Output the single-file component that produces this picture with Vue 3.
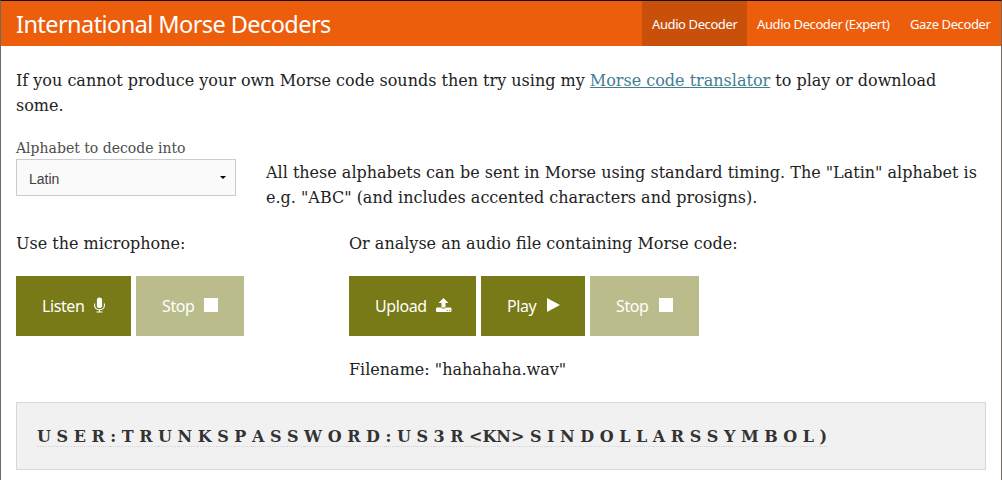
<script setup>
const nav = [
  { label: 'Audio Decoder', cls: 'n1 active' },
  { label: 'Audio Decoder (Expert)', cls: 'n2' },
  { label: 'Gaze Decoder', cls: 'n3' },
]
const decoded = [
  ...'USER:TRUNKSPASSWORD:US3R',
  '<KN>',
  ...'SINDOLLARSSYMBOL)',
]
</script>

<template>
  <div class="page">
    <header class="bar">
      <h1><span>International Morse Decoders</span></h1>
      <nav>
        <a v-for="n in nav" :key="n.label" :class="n.cls"><span>{{ n.label }}</span></a>
      </nav>
    </header>
    <main>
      <p class="intro">If you cannot produce your own Morse code sounds then try using my <a class="link">Morse code translator</a> to play or download some.</p>
      <section class="alphabet">
        <div class="field">
          <label>Alphabet to decode into</label>
          <div class="select">
            <span>Latin</span>
            <svg width="6" height="3" viewBox="0 0 6 3"><path d="M0 0h6L3 3z" /></svg>
          </div>
        </div>
        <p>All these alphabets can be sent in Morse using standard timing. The "Latin" alphabet is e.g. "ABC" (and includes accented characters and prosigns).</p>
      </section>
      <section class="sources">
        <div class="mic">
          <p>Use the microphone:</p>
          <div class="buttons">
            <button class="listen"><span>Listen</span>
              <svg width="11" height="16" viewBox="0 0 11 16"><rect x="2.9" y="0.5" width="5.200" height="10.500" rx="2.6" fill="#fff" /><path d="M.6 6.500v2a4.900 4.300 0 0 0 9.800 0v-2M5.500 12.800V15M2.500 15h6" fill="none" stroke="#fff" stroke-width="1.1" /></svg>
            </button>
            <button class="stop off"><span>Stop</span>
              <svg width="14" height="14" viewBox="0 0 14 14"><rect width="14" height="14" fill="#fff" /></svg>
            </button>
          </div>
        </div>
        <div class="file">
          <p>Or analyse an audio file containing Morse code:</p>
          <div class="buttons">
            <button class="upload"><span>Upload</span>
              <svg width="16" height="14" viewBox="0 0 16 14"><path d="M7.500 0l5 5H9.500v4.500h-4V5h-3zM1 9.500h4q.6 1 1.500 1h2q.9 0 1.500-1h4.500q1 0 1 1v2.500q0 1-1 1H1q-1 0-1-1v-2.500q0-1 1-1z" fill="#fff" /><path d="M10.700 12.500h1M13 12.500h1" stroke="#777a16" stroke-width="1" /></svg>
            </button>
            <button class="play"><span>Play</span>
              <svg width="13" height="14" viewBox="0 0 13 14"><path d="M0 0l13 7L0 14z" fill="#fff" /></svg>
            </button>
            <button class="stop2 off"><span>Stop</span>
              <svg width="14" height="14" viewBox="0 0 14 14"><rect width="14" height="14" fill="#fff" /></svg>
            </button>
          </div>
          <p class="filename">Filename: "hahahaha.wav"</p>
        </div>
      </section>
      <div class="output"><span v-for="(c, i) in decoded" :key="i">{{ i < decoded.length - 1 ? c + ' ' : c }}</span></div>
    </main>
  </div>
</template>

<style>
body { margin: 0; overflow: hidden; }
</style>

<style scoped>
* { box-sizing: border-box; }
.page {
  height: 480px;
  border: solid #75695f;
  border-width: 1px 1px 0;
  border-top-color: #16120f;
  background: #fff;
  color: #222;
  font: 16px/25px "DejaVu Serif", serif;
  overflow: hidden;
}
p { margin: 0; }
.bar {
  height: 45px;
  display: flex;
  justify-content: space-between;
  background: #ec5e0c;
  color: #fff;
  font-family: "Noto Sans", sans-serif;
}
h1 { margin: 0; padding-left: 15px; font-size: 23.5px; font-weight: 400; line-height: 47px; letter-spacing: -0.57px; white-space: nowrap; }
nav { display: flex; font-size: 13px; line-height: 47px; letter-spacing: -0.4px; }
nav a { padding-left: 10px; white-space: nowrap; }
.n1 { width: 105px; }
.n2 { width: 153px; }
.n3 { width: 101px; }
.active { background: #c8500b; }
main { padding: 22px 15px 0; }
.link { color: #417e91; text-decoration: underline; }
.alphabet { display: flex; margin-top: 20px; height: 75px; }
.field { width: 220px; margin-right: 30px; }
label { display: block; color: #4d4d4d; font-size: 14px; line-height: 21px; white-space: nowrap; }
.select {
  height: 37px;
  display: flex;
  align-items: center;
  justify-content: space-between;
  padding: 2px 9px 0 12px;
  border: 1px solid #ccc;
  background: #fafafa;
  color: #404040;
  font: 14px "Liberation Sans", sans-serif;
}
.select svg { margin-top: -3px; }
.alphabet > p { padding-top: 22px; width: 720px; }
.sources { display: flex; margin-top: 18px; height: 151px; }
.mic { width: 333px; }
.buttons { display: flex; gap: 5px; margin-top: 20px; }
button {
  height: 60px;
  margin: 0;
  padding: 0 0 0 26px;
  border: 0;
  display: flex;
  align-items: center;
  background: #777a16;
  color: #fff;
  font: 16px "Noto Sans", sans-serif;
  letter-spacing: -0.4px;
}
button span { white-space: nowrap; }
button svg { flex: none; margin-left: 9.6px; margin-top: -2px; }
.off { background: #babd8b; }
.listen { width: 115px; }
.stop { width: 108px; }
.upload { width: 127px; }
.play { width: 104px; }
.stop2 { width: 109px; }
.upload svg { margin-left: 9px; }
.play svg, .stop2 svg { margin-left: 10.4px; }
.filename { margin-top: 21px; }
.output {
  height: 68px;
  margin-top: 20px;
  padding: 21px 20px;
  border: 1px solid #d8d8d8;
  background: #f1f1f1;
  color: #333;
  font-weight: 700;
  letter-spacing: -0.008px;
  white-space: pre-wrap;
}
.output span { border-bottom: 1px dotted #d4d4d4; }
</style>
